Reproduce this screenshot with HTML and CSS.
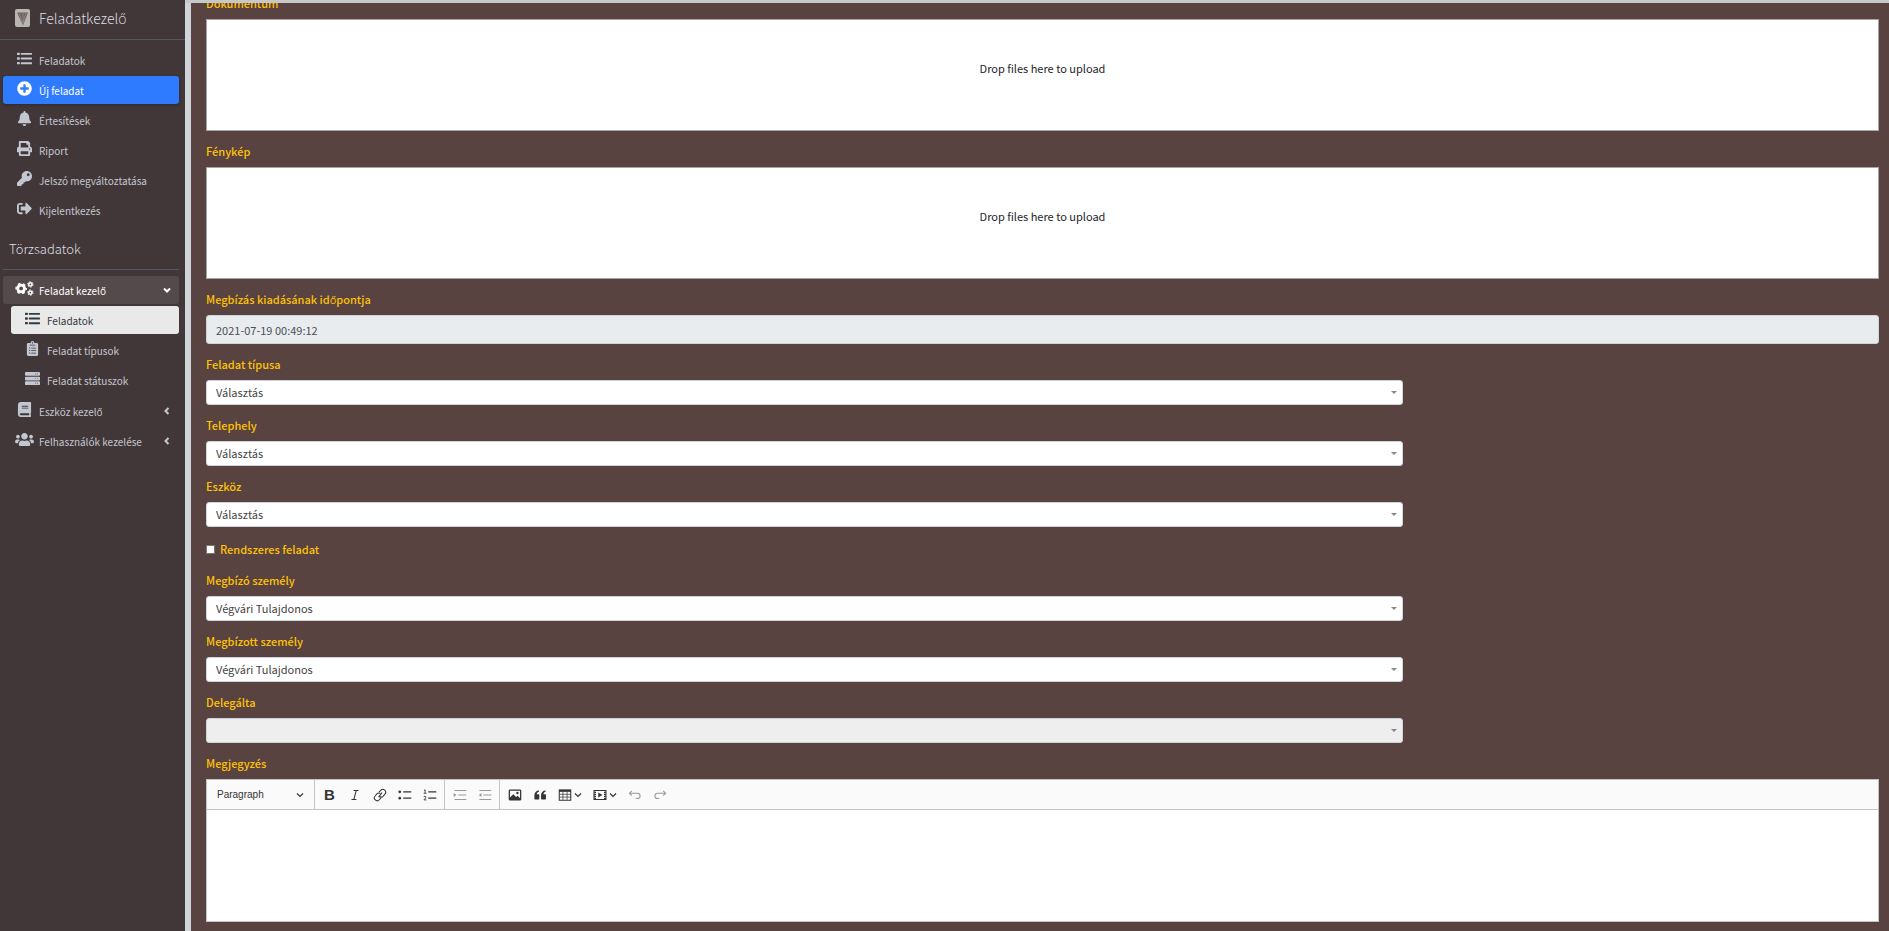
FILE: index.html
```html
<!DOCTYPE html>
<html lang="hu">
<head>
<meta charset="utf-8">
<title>Feladatkezelő</title>
<link rel="stylesheet" href="styles.css">
</head>
<body>
<svg class="sprite" aria-hidden="true">
  <symbol id="i-list" viewBox="0 0 512 512"><path d="M16 56h64a16 16 0 0 1 16 16v48a16 16 0 0 1-16 16H16a16 16 0 0 1-16-16V72a16 16 0 0 1 16-16zm0 160h64a16 16 0 0 1 16 16v48a16 16 0 0 1-16 16H16a16 16 0 0 1-16-16v-48a16 16 0 0 1 16-16zm0 160h64a16 16 0 0 1 16 16v48a16 16 0 0 1-16 16H16a16 16 0 0 1-16-16v-48a16 16 0 0 1 16-16zM144 64h352a16 16 0 0 1 16 16v32a16 16 0 0 1-16 16H144a16 16 0 0 1-16-16V80a16 16 0 0 1 16-16zm0 160h352a16 16 0 0 1 16 16v32a16 16 0 0 1-16 16H144a16 16 0 0 1-16-16v-32a16 16 0 0 1 16-16zm0 160h352a16 16 0 0 1 16 16v32a16 16 0 0 1-16 16H144a16 16 0 0 1-16-16v-32a16 16 0 0 1 16-16z"/></symbol>
  <symbol id="i-plus" viewBox="0 0 512 512"><path d="M256 8C119 8 8 119 8 256s111 248 248 248 248-111 248-248S393 8 256 8zm144 276c0 6.600-5.400 12-12 12h-92v92c0 6.600-5.400 12-12 12h-56c-6.600 0-12-5.400-12-12v-92h-92c-6.600 0-12-5.400-12-12v-56c0-6.600 5.400-12 12-12h92v-92c0-6.600 5.400-12 12-12h56c6.600 0 12 5.400 12 12v92h92c6.600 0 12 5.400 12 12v56z"/></symbol>
  <symbol id="i-bell" viewBox="0 0 448 512"><path d="M224 512c35.320 0 63.970-28.650 63.970-64H160.030c0 35.350 28.650 64 63.970 64zm215.390-149.710c-19.320-20.760-55.470-51.990-55.470-154.290 0-77.700-54.480-139.900-127.940-155.160V32c0-17.670-14.320-32-31.980-32s-31.980 14.330-31.980 32v20.840C118.560 68.100 64.080 130.300 64.080 208c0 102.300-36.150 133.530-55.470 154.290-6 6.450-8.660 14.160-8.610 21.710.11 16.400 12.980 32 32.100 32h383.800c19.120 0 32-15.600 32.100-32 .05-7.550-2.610-15.270-8.610-21.710z"/></symbol>
  <symbol id="i-print" viewBox="0 0 512 512"><path d="M448 192V77.250c0-8.490-3.370-16.620-9.370-22.630L393.370 9.370c-6-6-14.140-9.370-22.630-9.370H96C78.330 0 64 14.330 64 32v160c-35.350 0-64 28.650-64 64v112c0 8.840 7.160 16 16 16h48v96c0 17.670 14.330 32 32 32h320c17.670 0 32-14.330 32-32v-96h48c8.840 0 16-7.160 16-16V256c0-35.350-28.650-64-64-64zm-64 256H128v-96h256v96zm0-224H128V64h192v48c0 8.840 7.160 16 16 16h48v96zm48 72c-13.250 0-24-10.750-24-24 0-13.260 10.750-24 24-24s24 10.740 24 24c0 13.250-10.750 24-24 24z"/></symbol>
  <symbol id="i-key" viewBox="0 0 512 512"><path d="M512 176C512 273.200 433.200 352 336 352c-11.220 0-22.190-1.062-32.827-3.069l-24.012 27.014A24 24 0 0 1 261.223 384H224v40c0 13.255-10.745 24-24 24h-40v40c0 13.255-10.745 24-24 24H24c-13.255 0-24-10.745-24-24v-78.059c0-6.365 2.529-12.470 7.029-16.971l161.802-161.802C163.108 213.814 160 195.271 160 176 160 78.798 238.797 0 336 0c97.488 0 176 78.511 176 176zM336 128c0 26.510 21.490 48 48 48s48-21.490 48-48-21.490-48-48-48-48 21.490-48 48z"/></symbol>
  <symbol id="i-out" viewBox="0 0 512 512"><path d="M497 273L329 441c-15 15-41 4.500-41-17v-96H152c-13.300 0-24-10.700-24-24v-96c0-13.300 10.700-24 24-24h136V88c0-21.400 25.900-32 41-17l168 168c9.300 9.400 9.300 24.600 0 34zM192 436v-40c0-6.600-5.400-12-12-12H96c-17.700 0-32-14.300-32-32V160c0-17.700 14.300-32 32-32h84c6.600 0 12-5.400 12-12V76c0-6.600-5.400-12-12-12H96c-53 0-96 43-96 96v192c0 53 43 96 96 96h84c6.600 0 12-5.400 12-12z"/></symbol>
  <symbol id="i-cogs" viewBox="0 0 640 512"><g fill="none" stroke="currentColor"><circle cx="205" cy="256" r="115" stroke-width="100"/><circle cx="205" cy="256" r="172" stroke-width="50" stroke-dasharray="90 90" stroke-dashoffset="45"/><circle cx="520" cy="116" r="56" stroke-width="54"/><circle cx="520" cy="116" r="92" stroke-width="34" stroke-dasharray="48 48"/><circle cx="520" cy="396" r="56" stroke-width="54"/><circle cx="520" cy="396" r="92" stroke-width="34" stroke-dasharray="48 48"/></g></symbol>
  <symbol id="i-clip" viewBox="0 0 384 512"><path fill-rule="evenodd" d="M336 64h-80a64 64 0 0 0-128 0H48a48 48 0 0 0-48 48v352a48 48 0 0 0 48 48h288a48 48 0 0 0 48-48V112a48 48 0 0 0-48-48zM192 40a24 24 0 1 1 0 48 24 24 0 0 1 0-48zM96 128h192v24H96zM80 224h36v36H80zM152 228h160v26H152zM80 308h36v36H80zM152 314h160v26H152zM80 394h36v36H80zM152 400h160v26H152z"/></symbol>
  <symbol id="i-server" viewBox="0 0 512 512"><path fill-rule="evenodd" d="M32 32h448a32 32 0 0 1 32 32v64a32 32 0 0 1-32 32H32a32 32 0 0 1-32-32V64a32 32 0 0 1 32-32zm0 160h448a32 32 0 0 1 32 32v64a32 32 0 0 1-32 32H32a32 32 0 0 1-32-32v-64a32 32 0 0 1 32-32zm0 160h448a32 32 0 0 1 32 32v64a32 32 0 0 1-32 32H32a32 32 0 0 1-32-32v-64a32 32 0 0 1 32-32zM350 84h28v24h-28zm64 0h28v24h-28zM350 244h28v24h-28zm64 0h28v24h-28zM350 404h28v24h-28zm64 0h28v24h-28z"/></symbol>
  <symbol id="i-book" viewBox="0 0 448 512"><path d="M448 360V24c0-13.300-10.700-24-24-24H96C43 0 0 43 0 96v320c0 53 43 96 96 96h328c13.300 0 24-10.700 24-24v-16c0-7.500-3.500-14.300-8.900-18.700-4.200-15.400-4.200-59.300 0-74.700 5.400-4.300 8.900-11.100 8.900-18.600zM128 134c0-3.300 2.700-6 6-6h212c3.300 0 6 2.700 6 6v20c0 3.300-2.700 6-6 6H134c-3.300 0-6-2.700-6-6v-20zm0 64c0-3.300 2.700-6 6-6h212c3.300 0 6 2.700 6 6v20c0 3.300-2.700 6-6 6H134c-3.300 0-6-2.700-6-6v-20zm253.400 250H96c-17.700 0-32-14.300-32-32 0-17.600 14.400-32 32-32h285.400c-1.900 17.100-1.900 46.900 0 64z"/></symbol>
  <symbol id="i-users" viewBox="0 0 640 512"><path d="M96 224c35.300 0 64-28.700 64-64s-28.700-64-64-64-64 28.700-64 64 28.700 64 64 64zm448 0c35.300 0 64-28.700 64-64s-28.700-64-64-64-64 28.700-64 64 28.700 64 64 64zm32 32h-64c-17.600 0-33.500 7.100-45.100 18.600 40.300 22.100 68.900 62 75.100 109.400h66c17.700 0 32-14.300 32-32v-32c0-35.300-28.700-64-64-64zm-256 0c61.900 0 112-50.100 112-112S381.900 32 320 32 208 82.100 208 144s50.100 112 112 112zm76.800 32h-8.300c-20.800 10-43.900 16-68.500 16s-47.600-6-68.500-16h-8.300C179.600 288 128 339.600 128 403.200V432c0 26.500 21.500 48 48 48h288c26.500 0 48-21.500 48-48v-28.800c0-63.600-51.600-115.200-115.200-115.200zm-223.700-13.400C161.500 263.100 145.600 256 128 256H64c-35.300 0-64 28.700-64 64v32c0 17.700 14.300 32 32 32h65.900c6.300-47.400 34.900-87.300 75.200-109.400z"/></symbol>
  <symbol id="i-down" viewBox="0 0 10 10"><path d="M2 3.500l3 3 3-3" fill="none" stroke="currentColor" stroke-width="2"/></symbol>
  <symbol id="i-left" viewBox="0 0 10 10"><path d="M6.500 2l-3 3 3 3" fill="none" stroke="currentColor" stroke-width="2"/></symbol>
  <symbol id="i-chev" viewBox="0 0 10 10"><path d="M2 3.500l3 3 3-3" fill="none" stroke="currentColor" stroke-width="1.200"/></symbol>
</svg>
<div class="app">
  <aside class="sidebar">
    <a class="brand" href="#">
      <svg class="logo" viewBox="0 0 15 18" aria-hidden="true"><rect width="15" height="18" rx="2" fill="#b9b5b3"/><path d="M2 3.500h11L8 16.500z" fill="#6f6361"/><path d="M4 4l3.500 11M8 4v10M11 4L8 14" stroke="#9a8f8c" stroke-width=".7"/></svg>
      <span>Feladatkezelő</span>
    </a>
    <nav>
      <ul class="menu">
        <li><a class="item" href="#"><svg class="ico"><use href="#i-list"/></svg><span>Feladatok</span></a></li>
        <li><a class="item primary" href="#"><svg class="ico"><use href="#i-plus"/></svg><span>Új feladat</span></a></li>
        <li><a class="item" href="#"><svg class="ico"><use href="#i-bell"/></svg><span>Értesítések</span></a></li>
        <li><a class="item" href="#"><svg class="ico"><use href="#i-print"/></svg><span>Riport</span></a></li>
        <li><a class="item" href="#"><svg class="ico"><use href="#i-key"/></svg><span>Jelszó megváltoztatása</span></a></li>
        <li><a class="item" href="#"><svg class="ico"><use href="#i-out"/></svg><span>Kijelentkezés</span></a></li>
      </ul>
      <h2 class="section">Törzsadatok</h2>
      <ul class="menu">
        <li><a class="item open" href="#"><svg class="ico"><use href="#i-cogs"/></svg><span>Feladat kezelő</span><svg class="arrow"><use href="#i-down"/></svg></a>
          <ul class="menu sub">
            <li><a class="item current" href="#"><svg class="ico"><use href="#i-list"/></svg><span>Feladatok</span></a></li>
            <li><a class="item" href="#"><svg class="ico"><use href="#i-clip"/></svg><span>Feladat típusok</span></a></li>
            <li><a class="item" href="#"><svg class="ico"><use href="#i-server"/></svg><span>Feladat státuszok</span></a></li>
          </ul>
        </li>
        <li><a class="item" href="#"><svg class="ico"><use href="#i-book"/></svg><span>Eszköz kezelő</span><svg class="arrow"><use href="#i-left"/></svg></a></li>
        <li><a class="item" href="#"><svg class="ico"><use href="#i-users"/></svg><span>Felhasználók kezelése</span><svg class="arrow"><use href="#i-left"/></svg></a></li>
      </ul>
    </nav>
  </aside>
  <main class="main">
    <form class="form">
      <div class="field"><label for="doc">Dokumentum</label><button type="button" class="drop" id="doc">Drop files here to upload</button></div>
      <div class="field"><label for="photo">Fénykép</label><button type="button" class="drop" id="photo">Drop files here to upload</button></div>
      <div class="field"><label for="date">Megbízás kiadásának időpontja</label><input class="text" id="date" type="text" value="2021-07-19 00:49:12" readonly></div>
      <div class="field"><label for="type">Feladat típusa</label><div class="pick"><select id="type"><option>Választás</option></select></div></div>
      <div class="field"><label for="site">Telephely</label><div class="pick"><select id="site"><option>Választás</option></select></div></div>
      <div class="field"><label for="tool">Eszköz</label><div class="pick"><select id="tool"><option>Választás</option></select></div></div>
      <div class="check"><input id="regular" type="checkbox"><label for="regular">Rendszeres feladat</label></div>
      <div class="field"><label for="client">Megbízó személy</label><div class="pick"><select id="client"><option>Végvári Tulajdonos</option></select></div></div>
      <div class="field"><label for="agent">Megbízott személy</label><div class="pick"><select id="agent"><option>Végvári Tulajdonos</option></select></div></div>
      <div class="field"><label for="delegate">Delegálta</label><div class="pick"><select id="delegate" disabled><option></option></select></div></div>
      <div class="field"><label for="note">Megjegyzés</label>
        <div class="editor">
          <div class="toolbar">
            <button type="button" class="style">Paragraph<svg class="chev"><use href="#i-chev"/></svg></button>
            <div class="group">
              <button type="button" class="bold" aria-label="Bold">B</button>
              <button type="button" aria-label="Italic"><svg viewBox="0 0 20 20"><path d="M8 3.600h7M5 16.400h7M11.700 3.600l-3.300 12.800" stroke-width="1.500"/></svg></button>
              <button type="button" aria-label="Link"><svg viewBox="0 0 20 20"><path d="M8 13l5-6.500M8.500 6l2.500-2.600a4 4 0 0 1 6 5.400l-2.500 3a4 4 0 0 1-5 .4M11.500 14l-2.500 2.800a4 4 0 0 1-6-5.400l2.500-3a4 4 0 0 1 5-.4" stroke-width="1.500"/></svg></button>
              <button type="button" aria-label="Bulleted list"><svg viewBox="0 0 20 20"><path d="M7.500 5.500h11.500M7.500 14.500h11.500" stroke-width="1.600"/><g fill="currentColor" stroke="none"><circle cx="2.500" cy="5.500" r="1.900"/><circle cx="2.500" cy="14.500" r="1.900"/></g></svg></button>
              <button type="button" aria-label="Numbered list"><svg viewBox="0 0 20 20"><path d="M7.500 5.500h11.500M7.500 14.500h11.500" stroke-width="1.600"/><path d="M1.500 3.500L3 2.500v5M1 7.500h4M1 12.500q2-1.500 3 0T1.300 17H5" stroke-width="1.200"/></svg></button>
            </div>
            <div class="group faded">
              <button type="button" disabled aria-label="Increase indent"><svg viewBox="0 0 20 20"><path d="M2 3.500h17M7.500 10H19M2 16.500h17" stroke-width="1.600"/><path d="M1 7l4 3-4 3z" fill="currentColor" stroke="none"/></svg></button>
              <button type="button" disabled aria-label="Decrease indent"><svg viewBox="0 0 20 20"><path d="M2 3.500h17M7.500 10H19M2 16.500h17" stroke-width="1.600"/><path d="M5 7l-4 3 4 3z" fill="currentColor" stroke="none"/></svg></button>
            </div>
            <div class="group last">
              <button type="button" aria-label="Insert image"><svg viewBox="0 0 20 20"><path fill="currentColor" stroke="none" fill-rule="evenodd" d="M3 2h14a2 2 0 0 1 2 2v12a2 2 0 0 1-2 2H3a2 2 0 0 1-2-2V4a2 2 0 0 1 2-2zm-.200 1.800v9.700L7.500 9l4 4 2.200-2 3.500 3.500V3.800zM13.500 5.500a1.700 1.700 0 1 1 0 3.400 1.700 1.700 0 0 1 0-3.400z"/></svg></button>
              <button type="button" aria-label="Block quote"><svg viewBox="0 0 20 20"><path fill="currentColor" stroke="none" d="M2 10.400a6.500 6.500 0 0 1 6.500-6.900v1.800c-2 .4-3 1.700-3.200 3.700h2.700q1 0 1 1v5.500q0 1-1 1H3q-1 0-1-1zM11.500 10.400a6.500 6.500 0 0 1 6.500-6.900v1.800c-2 .4-3 1.700-3.200 3.700h2.700q1 0 1 1v5.500q0 1-1 1h-5q-1 0-1-1z"/></svg></button>
              <button type="button" class="split" aria-label="Insert table"><svg viewBox="0 0 20 20"><path d="M1.800 3h16.400v14.500H1.800z" stroke-width="1.500"/><path d="M2 9h16M2 13h16M7 5v12M13 5v12" stroke-width="1"/><path d="M1.500 4h17" stroke-width="3"/></svg><svg class="chev"><use href="#i-chev"/></svg></button>
              <button type="button" class="split" aria-label="Insert media"><svg viewBox="0 0 20 20"><path d="M1.500 3.500h17v13h-17z" stroke-width="1.600"/><path d="M3 3v14M17 3v14" stroke-width="2.600" stroke-dasharray="1.800 1"/><path fill="currentColor" stroke="none" d="M7.500 6.500l6 3.500-6 3.500z"/></svg><svg class="chev"><use href="#i-chev"/></svg></button>
              <button type="button" class="off" disabled aria-label="Undo"><svg viewBox="0 0 20 20"><path d="M5.500 4L2 7.500 5.500 11M2 7.500h11.500a3.700 3.700 0 0 1 0 7.500H11" stroke-width="1.500"/></svg></button>
              <button type="button" class="off" disabled aria-label="Redo"><svg viewBox="0 0 20 20"><path d="M14.500 4L18 7.500 14.500 11M18 7.500H6.500a3.700 3.700 0 0 0 0 7.500H9" stroke-width="1.500"/></svg></button>
            </div>
          </div>
          <textarea id="note"></textarea>
        </div>
      </div>
    </form>
  </main>
</div>
</body>
</html>
```
FILE: styles.css
```css
* { box-sizing: border-box; }

body {
  margin: 0;
  background: #c8c8c8;
  color: #212529;
  font: 11px/19px "Noto Sans CJK SC", "Open Sans", sans-serif;
}

button, input, select, textarea { font: inherit; color: inherit; margin: 0; }
ul { list-style: none; margin: 0; padding: 0; }
a { color: inherit; text-decoration: none; }

.sprite { position: absolute; width: 0; height: 0; }

.app { display: flex; height: 100vh; overflow: hidden; }

.sidebar {
  flex: 0 0 185px;
  background: #423738;
  color: #c2c7d0;
}

.brand {
  display: flex;
  align-items: center;
  gap: 9px;
  height: 40px;
  padding: 0 15px 3px;
  border-bottom: 1px solid #4f5962;
  color: #dcdee2;
  font-size: 14px;
  font-weight: 300;
}
.logo { width: 15px; height: 18px; }

nav { padding: 6px 6px 0 3px; }

.menu { display: flex; flex-direction: column; gap: 2px; }
.sub { padding: 2px 0 1px 8px; }

.item {
  display: flex;
  align-items: center;
  gap: 2px;
  height: 28px;
  padding: 0 7px 0 9px;
  border-radius: 3px;
  font-size: 10px;
}
.ico { width: 25px; height: 15px; margin-bottom: 3px; fill: currentColor; }
.arrow { width: 10px; height: 10px; margin-left: auto; }

.primary { background: #2f7bff; color: #fff; box-shadow: 0 1px 3px rgba(0, 0, 0, .3); }
.open { background: #544a4b; color: #fff; }
.current { background: #e9e9e9; color: #343a40; }

.section {
  height: 40px;
  margin: 6px 0;
  padding: 7px 6px 0;
  border-bottom: 1px solid #4f5962;
  color: #dcdee2;
  font-size: 13px;
  line-height: 24px;
  font-weight: 300;
}

.main {
  flex: 1;
  min-width: 0;
  margin: 3px 0 0;
  padding: 0 10px 0 15px;
  border-left: 6px solid #d1d5d9;
  background: #584340;
  overflow: hidden;
}

.form { display: flex; flex-direction: column; gap: 11px; margin-top: -9px; }
.field { display: flex; flex-direction: column; gap: 6px; }
label { color: #ffc107; font-weight: 500; }

.drop {
  height: 112px;
  padding: 0 0 14px;
  background: #fff;
  border: 1px solid #a9a5a4;
}

.text {
  height: 29px;
  padding: 0 9px;
  background: #e9ecef;
  border: 1px solid #ced4da;
  border-radius: 3px;
  color: #495057;
}

.pick { position: relative; width: 71.55%; }
.pick::after {
  content: "";
  position: absolute;
  top: 11px;
  right: 6px;
  border: 3px solid transparent;
  border-top-color: #888;
  border-bottom: 0;
}
.pick select {
  display: block;
  width: 100%;
  height: 25px;
  padding: 0 9px;
  appearance: none;
  background: #fff;
  border: 1px solid #ced4da;
  border-radius: 3px;
  color: #444;
}
.pick select:disabled { background: #eee; opacity: 1; }

.check { display: flex; align-items: center; gap: 5px; height: 22px; }
.check input {
  appearance: none;
  width: 9px;
  height: 9px;
  background: #fff;
  border: 1px solid #767676;
}

.editor { border: 1px solid #c4c4c4; background: #fff; }
.toolbar {
  display: flex;
  height: 30px;
  background: #fafafa;
  border-bottom: 1px solid #c4c4c4;
  color: #333;
}
.toolbar button {
  display: flex;
  align-items: center;
  justify-content: center;
  width: 25px;
  padding: 0;
  background: none;
  border: 0;
}
.toolbar svg { width: 14px; height: 14px; fill: none; stroke: currentColor; }
.toolbar .chev { width: 10px; height: 10px; stroke: none; }
.toolbar .style {
  width: 108px;
  padding: 0 9px 0 10px;
  justify-content: space-between;
  border-right: 1px solid #c4c4c4;
  font: 10px/16px "Liberation Sans", Arial, sans-serif;
}
.toolbar .bold { font: bold 15px/16px "Liberation Sans", Arial, sans-serif; }
.group { display: flex; padding: 0 2px; border-right: 1px solid #c4c4c4; }
.group.last { border: 0; }
.toolbar .split { width: 35px; gap: 1px; padding-left: 2px; }
.faded button, .toolbar .off { color: #999; }

.editor textarea {
  display: block;
  width: 100%;
  height: 111px;
  padding: 8px;
  border: 0;
  resize: none;
  background: #fff;
}
```
